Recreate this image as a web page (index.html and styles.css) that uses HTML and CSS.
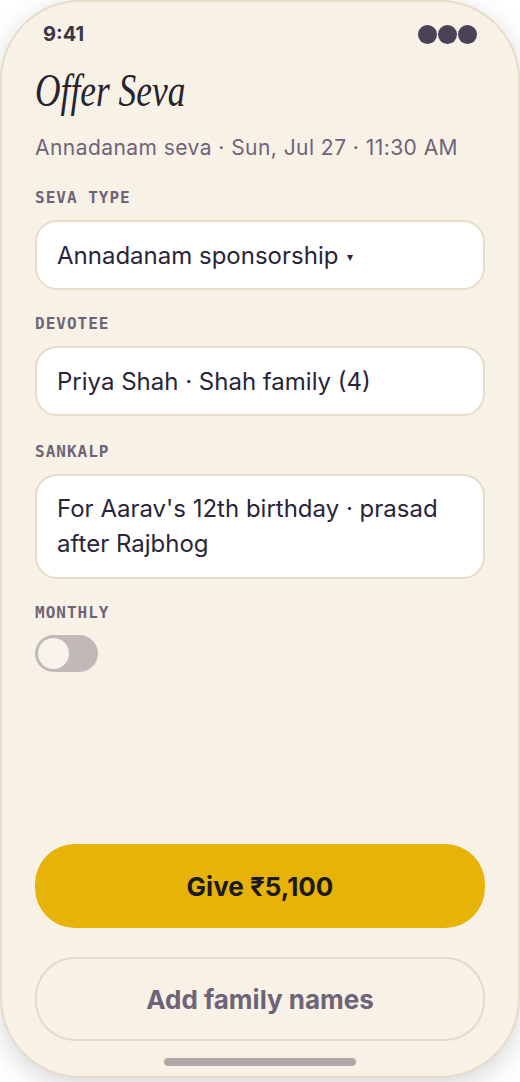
FILE: index.html
```html
<!DOCTYPE html>
<html lang="en">
<head>
<meta charset="utf-8">
<title>Offer Seva</title>
<link rel="stylesheet" href="styles.css">
</head>
<body>
<div class="phone">
  <div class="status">
    <span class="time">9:41</span>
    <span class="dots"><i></i><i></i><i></i></span>
  </div>
  <h1 class="title"><span>Offer Seva</span></h1>
  <p class="subtitle">Annadanam seva · Sun, Jul 27 · 11:30 AM</p>

  <div class="group first">
    <div class="label">SEVA TYPE</div>
    <div class="field">Annadanam sponsorship <span class="caret">▾</span></div>
  </div>
  <div class="group">
    <div class="label">DEVOTEE</div>
    <div class="field">Priya Shah · Shah family (4)</div>
  </div>
  <div class="group loose">
    <div class="label">SANKALP</div>
    <div class="field multi">For Aarav's 12th birthday · prasad after Rajbhog</div>
  </div>
  <div class="group">
    <div class="label">MONTHLY</div>
    <div class="toggle"><span class="knob"></span></div>
  </div>

  <div class="actions">
    <button class="btn primary">Give ₹5,100</button>
    <button class="btn secondary">Add family names</button>
  </div>
  <div class="home"></div>
</div>
</body>
</html>
```
FILE: styles.css
```css
* { box-sizing: border-box; }
html, body { margin: 0; padding: 0; background: #ffffff; }
body { width: 520px; height: 1082px; font-family: Inter, "Noto Sans", sans-serif; }

.phone {
  width: 520px;
  height: 1078px;
  border: 2px solid #e6dcc7;
  border-radius: 80px;
  background: #f7f1e6;
  box-shadow: 0 8px 28px rgba(0,0,0,0.16);
  padding: 20px 33px 0 33px;
  display: flex;
  flex-direction: column;
  overflow: hidden;
}

.status {
  height: 24px;
  display: flex;
  align-items: center;
  justify-content: space-between;
  padding: 0 8px 0 8px;
}
.time {
  font-size: 20px;
  font-weight: 700;
  color: #3b3546;
  line-height: 24px;
}
.dots { display: flex; gap: 1px; }
.dots i {
  display: block;
  width: 19px;
  height: 19px;
  border-radius: 50%;
  background: #4a4256;
}

.title {
  margin: 17px 0 0 0;
  height: 56px;
  line-height: 56px;
  font-family: "Liberation Serif", serif;
  font-style: italic;
  font-weight: 400;
  font-size: 46px;
  color: #26222f;
}
.title span {
  display: inline-block;
  transform: scaleX(0.77);
  transform-origin: left center;
}

.subtitle {
  margin: 15px 0 0 0;
  font-size: 21px;
  line-height: 28px;
  letter-spacing: 0.45px;
  color: #6e6479;
}

.group { margin-top: 24px; }
.group.first { margin-top: 26px; }
.group.loose { margin-top: 26px; }
.label {
  font-family: "DejaVu Sans Mono", monospace;
  font-size: 16px;
  line-height: 20px;
  font-weight: 700;
  letter-spacing: 1px;
  color: #6e6479;
  margin-bottom: 12px;
}
.field {
  height: 70px;
  border: 2px solid #e6dcc7;
  border-radius: 22px;
  background: #ffffff;
  padding: 0 20px;
  display: flex;
  align-items: center;
  font-size: 24px;
  color: #29253a;
}
.caret { font-size: 12px; margin-left: 9px; position: relative; top: 1px; }
.field.multi {
  height: auto;
  display: block;
  padding: 15px 20px 16px 20px;
  line-height: 35px;
}

.toggle {
  width: 63px;
  height: 37px;
  border-radius: 19px;
  background: #c0b9b8;
  padding: 3px 0 0 3px;
}
.knob {
  display: block;
  width: 31px;
  height: 31px;
  border-radius: 50%;
  background: #f8f3ea;
}

.actions {
  margin-top: auto;
  display: flex;
  flex-direction: column;
  gap: 29px;
}
.btn {
  height: 84px;
  width: 100%;
  border-radius: 40px;
  font-family: Inter, "Noto Sans", sans-serif;
  font-size: 26px;
  font-weight: 700;
  cursor: pointer;
}
.primary {
  background: #e8b308;
  border: none;
  color: #1c1a20;
}
.secondary {
  background: transparent;
  border: 2px solid #e4dac6;
  color: #6e6479;
}

.home {
  width: 192px;
  height: 8px;
  border-radius: 4px;
  background: #b0a8a6;
  margin: 17px auto 10px auto;
  flex: none;
}
```
